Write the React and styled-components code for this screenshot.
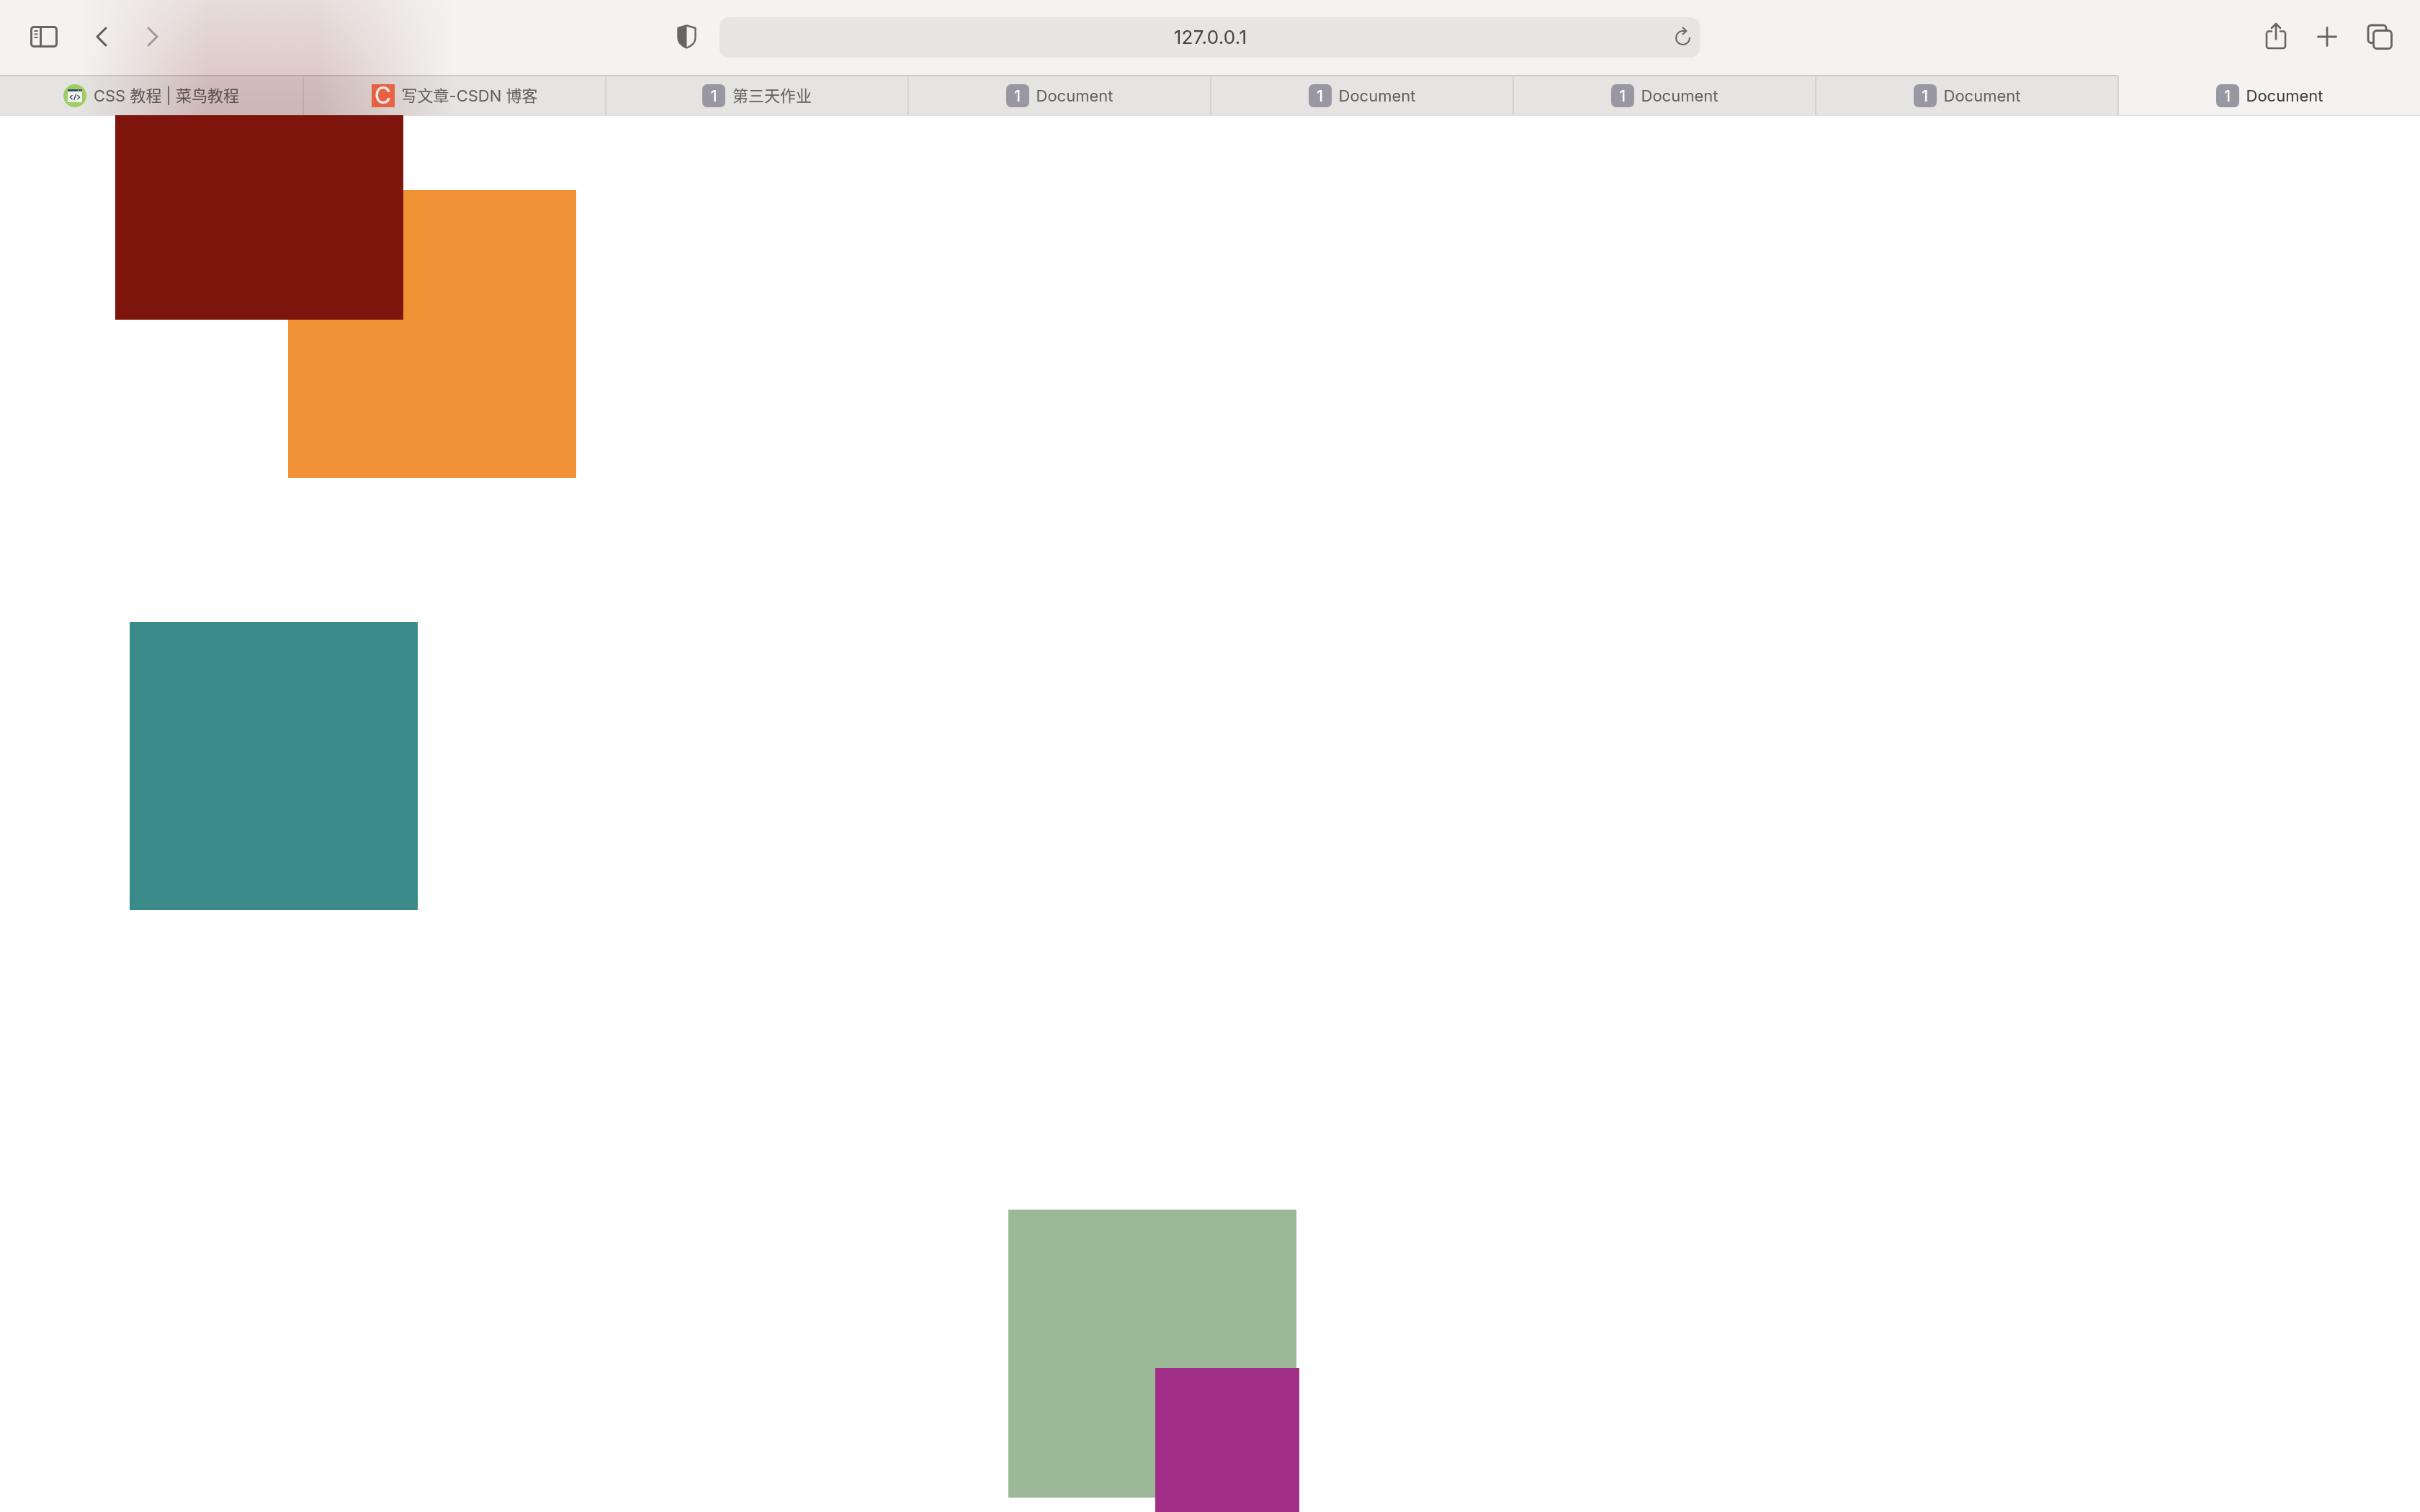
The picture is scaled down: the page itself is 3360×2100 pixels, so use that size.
import styled, { createGlobalStyle } from 'styled-components';

const GlobalStyle = createGlobalStyle`
  html, body {
    margin: 0;
    padding: 0;
    background: #ffffff;
  }
  body {
    font-family: "Inter", "Noto Sans CJK SC", sans-serif;
  }
`;

const Window = styled.div`
  width: 3360px;
  height: 2100px;
  overflow: hidden;
  display: flex;
  flex-direction: column;
`;

const Chrome = styled.header`
  position: relative;
  height: 160px;
  flex: none;
  overflow: hidden;
  background: #f4f3f1;
  z-index: 2;
`;

// the dark square showing through the translucent browser chrome
const BackdropTint = styled.div`
  position: absolute;
  left: 110px;
  top: 0;
  width: 520px;
  height: 160px;
  background: linear-gradient(to bottom, #f1e9e8 0%, #e9d6d5 60%, #e3cdcc 100%);
  mask-image: linear-gradient(to right, transparent 0%, #000 34%, #000 64%, transparent 100%);
  mix-blend-mode: multiply;
  pointer-events: none;
`;

const Toolbar = styled.div`
  height: 104px;
  display: grid;
  grid-template-columns: 999px 1361px 1fr;
  align-items: center;
`;

const NavGroup = styled.div`
  display: flex;
  align-items: center;
  box-sizing: border-box;
  padding: 0 0 2px 42px;
  height: 100%;
`;

const ShieldWrap = styled.div`
  display: flex;
  margin-left: auto;
  margin-right: 32px;
`;

const AddressBar = styled.div`
  position: relative;
  height: 56px;
  box-sizing: border-box;
  padding: 0 0 1px 2px;
  background: #e6e5e3;
  border-radius: 13px;
  display: flex;
  align-items: center;
  justify-content: center;
  font-size: 26px;
  letter-spacing: 0.3px;
  color: #444442;
`;

const ReloadWrap = styled.span`
  position: absolute;
  right: 12px;
  top: 13px;
  display: flex;
`;

const ActionGroup = styled.div`
  display: flex;
  align-items: center;
  justify-content: flex-end;
  box-sizing: border-box;
  padding: 0 38px 3px 0;
  height: 100%;
`;

const IconSlot = styled.span`
  display: flex;
  margin-left: ${(p) => p.$gap || 0}px;
  margin-top: ${(p) => p.$shift || 0}px;
`;

const TabBar = styled.nav`
  height: 56px;
  display: grid;
  grid-template-columns: repeat(8, 420px);
`;

const Tab = styled.div`
  display: flex;
  align-items: center;
  justify-content: center;
  gap: 10px;
  height: 56px;
  box-sizing: border-box;
  padding-bottom: 1px;
  font-size: 22px;
  line-height: 32px;
  white-space: nowrap;
  color: ${(p) => (p.$active ? '#3a3a38' : '#61605e')};
  background: ${(p) => (p.$active ? '#f4f3f1' : '#e5e4e2')};
  border-top: 2px solid ${(p) => (p.$active ? '#f4f3f1' : '#cbcac8')};
  border-left: 2px solid #d3d2d0;

  &:first-child {
    border-left: none;
  }
`;

const NumberBadge = styled.span`
  width: 32px;
  height: 32px;
  flex: none;
  border-radius: 7px;
  background: #9898a3;
  color: #ffffff;
  font-size: 22px;
  font-weight: 500;
  display: flex;
  align-items: center;
  justify-content: center;
`;

const CsdnIcon = styled.span`
  width: 32px;
  height: 32px;
  flex: none;
  background: #f56b48;
  color: #ffffff;
  font-size: 32px;
  font-weight: 500;
  display: flex;
  align-items: center;
  justify-content: center;
`;

const Page = styled.main`
  position: relative;
  flex: 1;
  background: #ffffff;
  box-shadow: inset 0 1px 0 #dfdedc;
  z-index: 3;
`;

// free canvas: each square's place on the page is the content itself
const Square = styled.div`
  position: absolute;
  left: ${(p) => p.$left}px;
  top: ${(p) => p.$top}px;
  width: ${(p) => p.$width || 400}px;
  height: ${(p) => p.$height || 400}px;
  background: ${(p) => p.$color};
`;

function SidebarIcon() {
  return (
    <svg width="38" height="30" viewBox="0 0 38 30" fill="none" stroke="#666563" strokeWidth="3">
      <rect x="1.5" y="1.5" width="35" height="27" rx="3.5" />
      <path d="M14.5 1.5v27" />
      <path d="M5.5 7h5M5.5 11.500h5M5.5 16h5" strokeWidth="2" />
    </svg>
  );
}

function Chevron({ dir, color }) {
  return (
    <svg width="16" height="28" viewBox="0 0 16 28" fill="none" stroke={color} strokeWidth="3" strokeLinecap="round" strokeLinejoin="round">
      <path d={dir === 'left' ? 'M14 2L2 14l12 12' : 'M2 2l12 12L2 26'} />
    </svg>
  );
}

function ShieldIcon() {
  return (
    <svg width="27" height="34" viewBox="0 0 27 34" fill="none">
      <path d="M13.5 1.5L25.5 5v14c0 5.5-5 10.500-12 13.500C6.500 29.500 1.500 24.500 1.500 19V5z" stroke="#666563" strokeWidth="2.4" strokeLinejoin="round" />
      <path d="M13.500 1.500L1.500 5v14c0 5.500 5 10.500 12 13.500z" fill="#666563" />
    </svg>
  );
}

function ReloadIcon() {
  return (
    <svg width="26" height="26" viewBox="0 0 26 26" fill="none" stroke="#666563" strokeWidth="2" strokeLinecap="round" strokeLinejoin="round">
      <path d="M17 6H14.500A9.500 9.500 0 1 0 24 15.500" />
      <path d="M14.500 1.500l5 4.500-5 4.500" />
    </svg>
  );
}

function ShareIcon() {
  return (
    <svg width="30" height="38" viewBox="0 0 30 38" fill="none" stroke="#666563" strokeWidth="2.600" strokeLinecap="round" strokeLinejoin="round">
      <path d="M9 12.500H5a3 3 0 0 0-3 3V33a3 3 0 0 0 3 3h20a3 3 0 0 0 3-3V15.500a3 3 0 0 0-3-3h-4" />
      <path d="M15 23.500V2M9 8l6-6 6 6" />
    </svg>
  );
}

function PlusIcon() {
  return (
    <svg width="28" height="28" viewBox="0 0 28 28" fill="none" stroke="#666563" strokeWidth="2.800" strokeLinecap="round">
      <path d="M14 1.500v25M1.500 14h25" />
    </svg>
  );
}

function TabsIcon() {
  return (
    <svg width="36" height="36" viewBox="0 0 36 36" fill="none" stroke="#666563" strokeWidth="2.800" strokeLinejoin="round">
      <path d="M8.500 26.500H6a4 4 0 0 1-4-4V6a4 4 0 0 1 4-4h17a4 4 0 0 1 4 4v3" />
      <rect x="9.500" y="9.500" width="25" height="25" rx="4.500" />
    </svg>
  );
}

function RunoobIcon() {
  return (
    <svg width="32" height="32" viewBox="0 0 32 32">
      <circle cx="16" cy="16" r="16" fill="#9fcf63" />
      <rect x="6" y="7" width="20" height="18" fill="#f2f5ef" />
      <rect x="6" y="7" width="20" height="3" fill="#30506b" />
      <circle cx="21" cy="8.500" r="1" fill="#e9b53f" />
      <circle cx="24" cy="8.500" r="1" fill="#d9534f" />
      <path d="M12.500 15l-3 3 3 3M19.500 15l3 3-3 3M17.500 14l-3 8" fill="none" stroke="#30506b" strokeWidth="1.400" />
    </svg>
  );
}

const numberedTabs = ['第三天作业', 'Document', 'Document', 'Document', 'Document'];

const squares = [
  { id: 'orange', left: 400, top: 104, color: '#f19135' },
  { id: 'red', left: 160, top: 0, height: 284, color: '#7d150d' },
  { id: 'teal', left: 180, top: 704, color: '#3b8a8a' },
  { id: 'green', left: 1400, top: 1520, color: '#9bb996' },
  { id: 'purple', left: 1604, top: 1740, width: 200, height: 200, color: '#a12f87' },
];

function App() {
  return (
    <Window>
      <GlobalStyle />
      <Chrome>
        <Toolbar>
          <NavGroup>
            <SidebarIcon />
            <IconSlot $gap={53}><Chevron dir="left" color="#5f5e5c" /></IconSlot>
            <IconSlot $gap={55}><Chevron dir="right" color="#aaa5a2" /></IconSlot>
            <ShieldWrap><ShieldIcon /></ShieldWrap>
          </NavGroup>
          <AddressBar>
            127.0.0.1
            <ReloadWrap><ReloadIcon /></ReloadWrap>
          </AddressBar>
          <ActionGroup>
            <IconSlot $shift={-1}><ShareIcon /></IconSlot>
            <IconSlot $gap={42}><PlusIcon /></IconSlot>
            <IconSlot $gap={41}><TabsIcon /></IconSlot>
          </ActionGroup>
        </Toolbar>
        <TabBar>
          <Tab><RunoobIcon />CSS 教程 | 菜鸟教程</Tab>
          <Tab><CsdnIcon>C</CsdnIcon>写文章-CSDN 博客</Tab>
          {numberedTabs.map((title, i) => (
            <Tab key={i}><NumberBadge>1</NumberBadge>{title}</Tab>
          ))}
          <Tab $active><NumberBadge>1</NumberBadge>Document</Tab>
        </TabBar>
        <BackdropTint />
      </Chrome>
      <Page>
        {squares.map((s) => (
          <Square key={s.id} $left={s.left} $top={s.top} $width={s.width} $height={s.height} $color={s.color} />
        ))}
      </Page>
    </Window>
  );
}

export default App;
